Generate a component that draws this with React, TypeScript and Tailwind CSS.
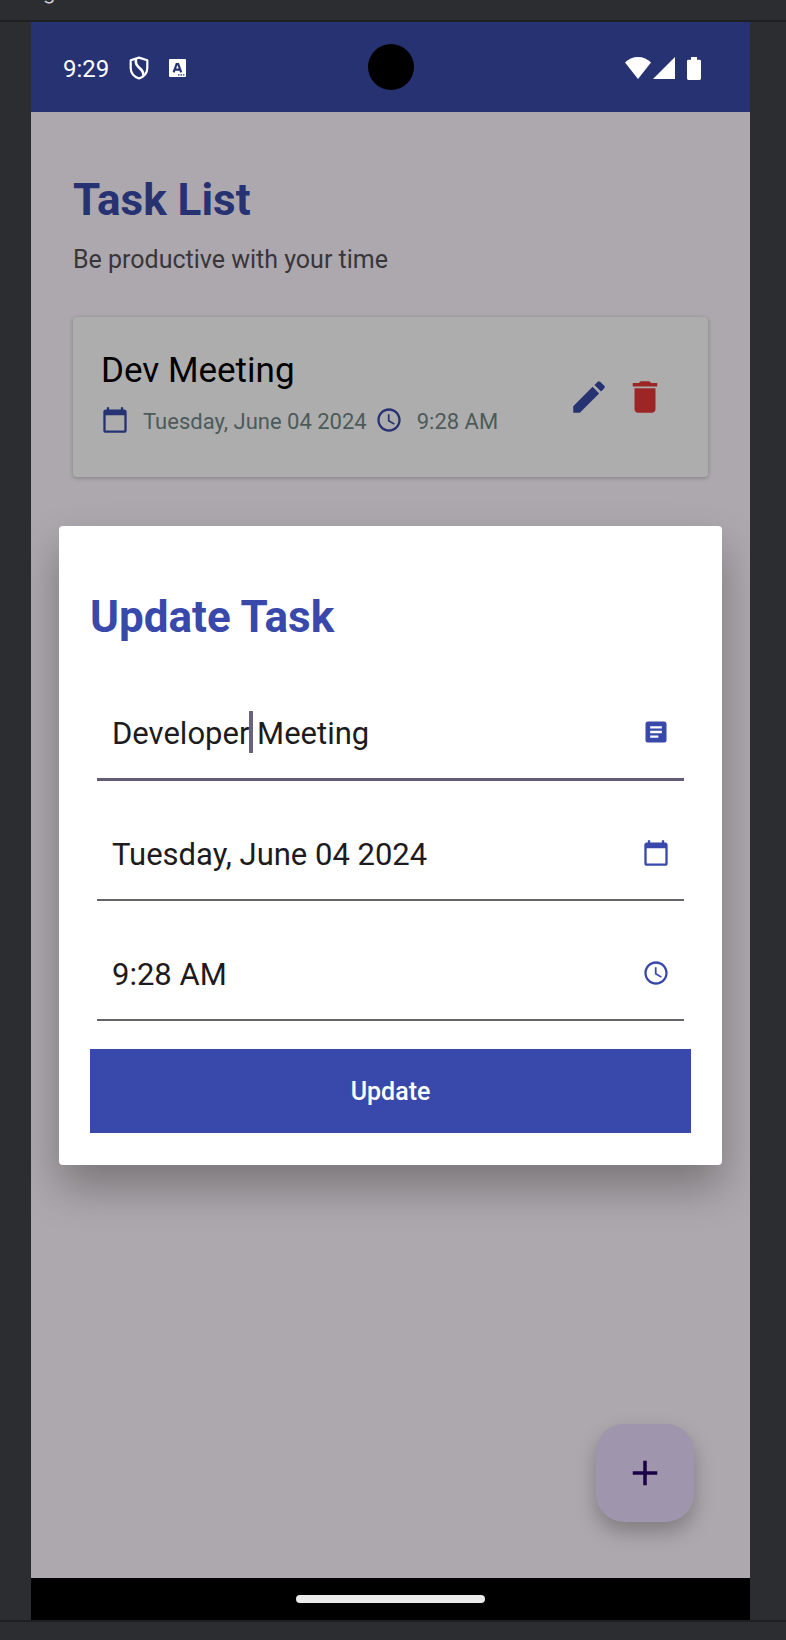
import { useState, type ReactNode } from "react";
import {
  MdAccessTime,
  MdAdd,
  MdArticle,
  MdCalendarToday,
  MdDelete,
  MdEdit,
} from "react-icons/md";

function ShieldIcon() {
  return (
    <svg viewBox="0 0 20 24" className="h-6 w-5" fill="none" stroke="white" strokeWidth="2.2" strokeLinejoin="round" aria-hidden="true">
      <path d="M10 1.6 18.3 4.2V12C18.3 17 14.6 20.8 10 22.5 5.4 20.8 1.7 17 1.7 12V4.2Z" />
      <path d="M7 2.8C6 7.400 7.400 9.400 10 11.600 13 14 14.600 16.200 14.400 19.600" strokeWidth="2.6" />
    </svg>
  );
}

function KeyboardBadgeIcon() {
  return (
    <svg viewBox="0 0 17 18" className="h-[18px] w-[17px]" aria-hidden="true">
      <rect width="17" height="18" rx="1" fill="white" />
      <path d="M4.6 13.400 7.600 5H9.200L12.200 13.400M6.3 10.600H10.700" fill="none" stroke="#273273" strokeWidth="2.2" />
      <path d="M9 15.2h1.6v1.4H9zM11.5 15.2h1.6v1.4h-1.6zM14 15.2h1.4v1.4H14z" fill="#273273" />
    </svg>
  );
}

function StatusBar() {
  return (
    <header className="relative flex h-[90px] shrink-0 items-center justify-between bg-[#273273] pt-0.5 pr-[49px] pl-8 text-white">
      <div className="flex items-center">
        <span className="pt-0.5 text-2xl leading-[30px]">9:29</span>
        <span className="ml-5">
          <ShieldIcon />
        </span>
        <span className="ml-5">
          <KeyboardBadgeIcon />
        </span>
      </div>
      <div className="absolute inset-x-0 top-[22px] flex justify-center">
        <div className="size-[46px] rounded-full bg-black" />
      </div>
      <div className="flex items-center">
        <svg viewBox="0 0 26 22" className="h-[22px] w-[26px]" fill="white" aria-hidden="true">
          <path d="M0 5.6C3.4 2 8 0 13 0s9.600 2 13 5.600L13 22Z" />
        </svg>
        <svg viewBox="0 0 22 22" className="ml-0.5 h-[22px] w-[22px]" fill="white" aria-hidden="true">
          <path d="M22 0V22H0Z" />
        </svg>
        <svg viewBox="0 0 14 23" className="ml-3 h-[23px] w-[14px]" fill="white" aria-hidden="true">
          <path d="M4 0h6v2.800h2.600Q14 2.800 14 4.200V21.600Q14 23 12.600 23H1.400Q0 23 0 21.600V4.200Q0 2.800 1.400 2.800H4Z" />
        </svg>
      </div>
    </header>
  );
}

function TaskCard() {
  return (
    <article className="mt-[42px] flex items-center justify-between rounded-[4px] bg-[#adadad] pr-[42px] pl-7 shadow-[0_1px_4px_rgba(0,0,0,0.26)]">
      <div className="pt-[33px] pb-[43px]">
        <h2 className="text-[35px] leading-[41px] text-black">Dev Meeting</h2>
        <div className="mt-[15px] flex h-7 items-center gap-2 text-[22px] leading-7 text-[#4c5b5a]">
          <div className="flex items-center gap-3.5">
            <MdCalendarToday className="size-7 text-[#273273]" />
            <span className="pt-1">Tuesday, June 04 2024</span>
          </div>
          <div className="flex items-center gap-3.5">
            <MdAccessTime className="size-7 text-[#273273]" />
            <span className="pt-1">9:28 AM</span>
          </div>
        </div>
      </div>
      <div className="flex gap-3.5">
        <button type="button" aria-label="Edit task" className="text-[#273273]">
          <MdEdit className="size-[42px]" />
        </button>
        <button type="button" aria-label="Delete task" className="text-[#9c2626]">
          <MdDelete className="size-[42px]" />
        </button>
      </div>
    </article>
  );
}

type FieldProps = {
  id: string;
  label: string;
  initial: string;
  icon: ReactNode;
  focused?: boolean;
};

function Field({ id, label, initial, icon, focused = false }: FieldProps) {
  const [value, setValue] = useState(initial);
  return (
    <div
      className={
        focused
          ? "relative flex h-[98px] items-center border-b-3 border-[#625b76] pt-1 pr-3.5 pl-[15px]"
          : "relative flex h-[98px] items-center border-b-2 border-[#66636b] pt-1 pr-3.5 pl-[15px]"
      }
    >
      <input
        id={id}
        aria-label={label}
        value={value}
        onChange={(event) => setValue(event.target.value)}
        className="min-w-0 flex-1 bg-transparent pt-1 text-[31px] leading-9 text-[#1d1b20] outline-none"
      />
      {focused && <span className="absolute top-7 left-[152px] h-[42px] w-1 bg-[#6a627c]" />}
      <span className="text-[28px] text-[#3949ab]">{icon}</span>
    </div>
  );
}

function UpdateDialog() {
  return (
    <div className="absolute inset-0 flex items-center px-7">
      <form
        role="dialog"
        aria-labelledby="dialog-title"
        onSubmit={(event) => event.preventDefault()}
        className="w-full rounded-[4px] bg-white px-[31px] pt-[65px] pb-8 shadow-[0_22px_44px_rgba(0,0,0,0.3)]"
      >
        <h2 id="dialog-title" className="text-[44px] leading-[52px] font-bold text-[#3949ab]">
          Update Task
        </h2>
        <div className="mt-10 flex flex-col gap-[22px] px-[7px]">
          <Field id="task-title" label="Title" initial="Developer Meeting" icon={<MdArticle />} focused />
          <Field id="task-date" label="Date" initial="Tuesday, June 04 2024" icon={<MdCalendarToday />} />
          <Field id="task-time" label="Time" initial="9:28 AM" icon={<MdAccessTime />} />
        </div>
        <button type="submit" className="mt-7 h-[84px] w-full bg-[#3949ab] pt-[3px] text-[25px] font-medium text-white">
          Update
        </button>
      </form>
    </div>
  );
}

export default function App() {
  return (
    <div className="flex min-h-screen flex-col bg-[#2c2d30] font-[Roboto,sans-serif]">
      <div className="h-[22px] shrink-0 overflow-hidden border-b-2 border-[#1e1f22] pl-[43px]">
        <div className="-mt-5 font-[Inter,sans-serif] text-xl leading-6 text-[#ced0d6]">g</div>
      </div>
      <div className="mr-9 ml-[31px] flex flex-1 flex-col">
        <StatusBar />
        <main className="relative flex-1 overflow-hidden bg-[#ada8ad] px-[42px] pt-[62px]">
          <h1 className="text-[44px] leading-[52px] font-bold text-[#273273]">Task List</h1>
          <p className="mt-[19px] text-[25px] leading-[30px] text-[#38363b]">Be productive with your time</p>
          <TaskCard />
          <button
            type="button"
            aria-label="Add task"
            className="absolute right-14 bottom-14 flex size-[98px] items-center justify-center rounded-[28px] bg-[#9f95ac] text-[#1a0044] shadow-[0_10px_20px_rgba(0,0,0,0.26)]"
          >
            <MdAdd className="size-[42px]" />
          </button>
          <UpdateDialog />
        </main>
        <footer className="flex h-[42px] shrink-0 items-center justify-center bg-black">
          <div className="h-2 w-[189px] rounded-full bg-[#ebebeb]" />
        </footer>
      </div>
      <div className="h-5 shrink-0 border-t-2 border-[#1e1f22]" />
    </div>
  );
}
